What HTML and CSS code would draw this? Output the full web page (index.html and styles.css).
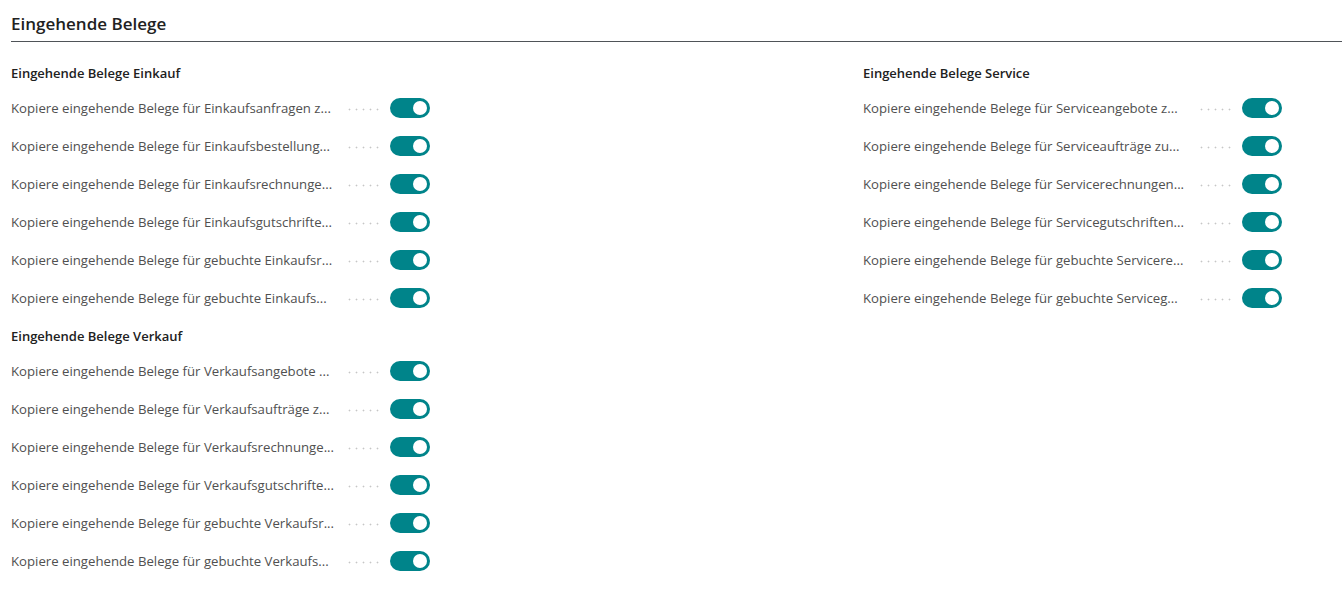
FILE: index.html
```html
<!DOCTYPE html>
<html lang="de">
<head>
    <meta charset="UTF-8">
    <meta name="viewport" content="width=device-width, initial-scale=1.0">
    <title>Eingehende Belege</title>
    <link rel="stylesheet" href="styles.css">
</head>
<body>

    <div class="page">
        <h2 class="caption">Eingehende Belege</h2>

        <div class="columns">

            <!-- linke Spalte: Einkauf + Verkauf -->
            <div class="column">
                <div class="group">
                    <h3>Eingehende Belege Einkauf</h3>
                    <div class="field"><span class="label" title="Kopiere eingehende Belege für Einkaufsanfragen zu Einkaufsbestellungen">Kopiere eingehende Belege für Einkaufsanfragen z...</span><span class="dots"></span><span class="toggle on"></span></div>
                    <div class="field"><span class="label" title="Kopiere eingehende Belege für Einkaufsbestellungen zu Einkaufsrechnungen">Kopiere eingehende Belege für Einkaufsbestellung...</span><span class="dots"></span><span class="toggle on"></span></div>
                    <div class="field"><span class="label" title="Kopiere eingehende Belege für Einkaufsrechnungen zu gebuchten Einkaufsrechnungen">Kopiere eingehende Belege für Einkaufsrechnunge...</span><span class="dots"></span><span class="toggle on"></span></div>
                    <div class="field"><span class="label" title="Kopiere eingehende Belege für Einkaufsgutschriften zu gebuchten Einkaufsgutschriften">Kopiere eingehende Belege für Einkaufsgutschrifte...</span><span class="dots"></span><span class="toggle on"></span></div>
                    <div class="field"><span class="label" title="Kopiere eingehende Belege für gebuchte Einkaufsrechnungen zu Korrekturen">Kopiere eingehende Belege für gebuchte Einkaufsr...</span><span class="dots"></span><span class="toggle on"></span></div>
                    <div class="field"><span class="label" title="Kopiere eingehende Belege für gebuchte Einkaufsgutschriften zu Korrekturen">Kopiere eingehende Belege für gebuchte Einkaufs...</span><span class="dots"></span><span class="toggle on"></span></div>
                </div>

                <div class="group">
                    <h3>Eingehende Belege Verkauf</h3>
                    <div class="field"><span class="label" title="Kopiere eingehende Belege für Verkaufsangebote zu Verkaufsaufträgen">Kopiere eingehende Belege für Verkaufsangebote ...</span><span class="dots"></span><span class="toggle on"></span></div>
                    <div class="field"><span class="label" title="Kopiere eingehende Belege für Verkaufsaufträge zu Verkaufsrechnungen">Kopiere eingehende Belege für Verkaufsaufträge z...</span><span class="dots"></span><span class="toggle on"></span></div>
                    <div class="field"><span class="label" title="Kopiere eingehende Belege für Verkaufsrechnungen zu gebuchten Verkaufsrechnungen">Kopiere eingehende Belege für Verkaufsrechnunge...</span><span class="dots"></span><span class="toggle on"></span></div>
                    <div class="field"><span class="label" title="Kopiere eingehende Belege für Verkaufsgutschriften zu gebuchten Verkaufsgutschriften">Kopiere eingehende Belege für Verkaufsgutschrifte...</span><span class="dots"></span><span class="toggle on"></span></div>
                    <div class="field"><span class="label" title="Kopiere eingehende Belege für gebuchte Verkaufsrechnungen zu Korrekturen">Kopiere eingehende Belege für gebuchte Verkaufsr...</span><span class="dots"></span><span class="toggle on"></span></div>
                    <div class="field"><span class="label" title="Kopiere eingehende Belege für gebuchte Verkaufsgutschriften zu Korrekturen">Kopiere eingehende Belege für gebuchte Verkaufs...</span><span class="dots"></span><span class="toggle on"></span></div>
                </div>
            </div>

            <!-- rechte Spalte: Service -->
            <div class="column">
                <div class="group">
                    <h3>Eingehende Belege Service</h3>
                    <div class="field"><span class="label" title="Kopiere eingehende Belege für Serviceangebote zu Serviceaufträgen">Kopiere eingehende Belege für Serviceangebote z...</span><span class="dots"></span><span class="toggle on"></span></div>
                    <div class="field"><span class="label" title="Kopiere eingehende Belege für Serviceaufträge zu Servicerechnungen">Kopiere eingehende Belege für Serviceaufträge zu...</span><span class="dots"></span><span class="toggle on"></span></div>
                    <div class="field"><span class="label" title="Kopiere eingehende Belege für Servicerechnungen zu gebuchten Servicerechnungen">Kopiere eingehende Belege für Servicerechnungen...</span><span class="dots"></span><span class="toggle on"></span></div>
                    <div class="field"><span class="label" title="Kopiere eingehende Belege für Servicegutschriften zu gebuchten Servicegutschriften">Kopiere eingehende Belege für Servicegutschriften...</span><span class="dots"></span><span class="toggle on"></span></div>
                    <div class="field"><span class="label" title="Kopiere eingehende Belege für gebuchte Servicerechnungen zu Korrekturen">Kopiere eingehende Belege für gebuchte Servicere...</span><span class="dots"></span><span class="toggle on"></span></div>
                    <div class="field"><span class="label" title="Kopiere eingehende Belege für gebuchte Servicegutschriften zu Korrekturen">Kopiere eingehende Belege für gebuchte Serviceg...</span><span class="dots"></span><span class="toggle on"></span></div>
                </div>
            </div>

        </div>
    </div>

</body>
</html>
```

FILE: styles.css
```css
body {
    margin: 0;
    background-color: #ffffff;
    font-family: "Open Sans", "Noto Sans", sans-serif;
    color: #505050;
}

.page {
    padding-left: 11px;
}

.caption {
    margin: 0;
    padding: 12px 0 5px 0;
    font-size: 17px;
    line-height: 24px;
    font-weight: 600;
    color: #212121;
    border-bottom: 1px solid #4f5358;
}

.columns {
    display: grid;
    grid-template-columns: 852px 1fr;
    padding-top: 21px;
}

.group + .group {
    margin-top: 9px;
}

.group h3 {
    margin: 0 0 6px 0;
    font-size: 13px;
    line-height: 20px;
    font-weight: 600;
    color: #212121;
}

.field {
    display: flex;
    align-items: center;
    height: 38px;
}

.field .label {
    width: 324px;
    font-size: 13.2px;
    white-space: nowrap;
    overflow: hidden;
    text-overflow: ellipsis;
}

/* gepunktete Führungslinie zwischen Beschriftung und Schalter */
.field .dots {
    width: 36px;
    height: 3px;
    margin: 2px 8px 0 11px;
    background-image: radial-gradient(circle, #c6c6c6 0.8px, transparent 1.1px);
    background-size: 7px 3px;
    background-repeat: repeat-x;
}

.toggle {
    position: relative;
    width: 40px;
    height: 20px;
    border-radius: 10px;
    background-color: #cccccc;
    flex-shrink: 0;
}

.toggle::after {
    content: "";
    position: absolute;
    top: 3px;
    left: 3px;
    width: 14px;
    height: 14px;
    border-radius: 50%;
    background-color: #ffffff;
}

.toggle.on {
    background-color: #00848a;
}

.toggle.on::after {
    left: 23px;
}
```
